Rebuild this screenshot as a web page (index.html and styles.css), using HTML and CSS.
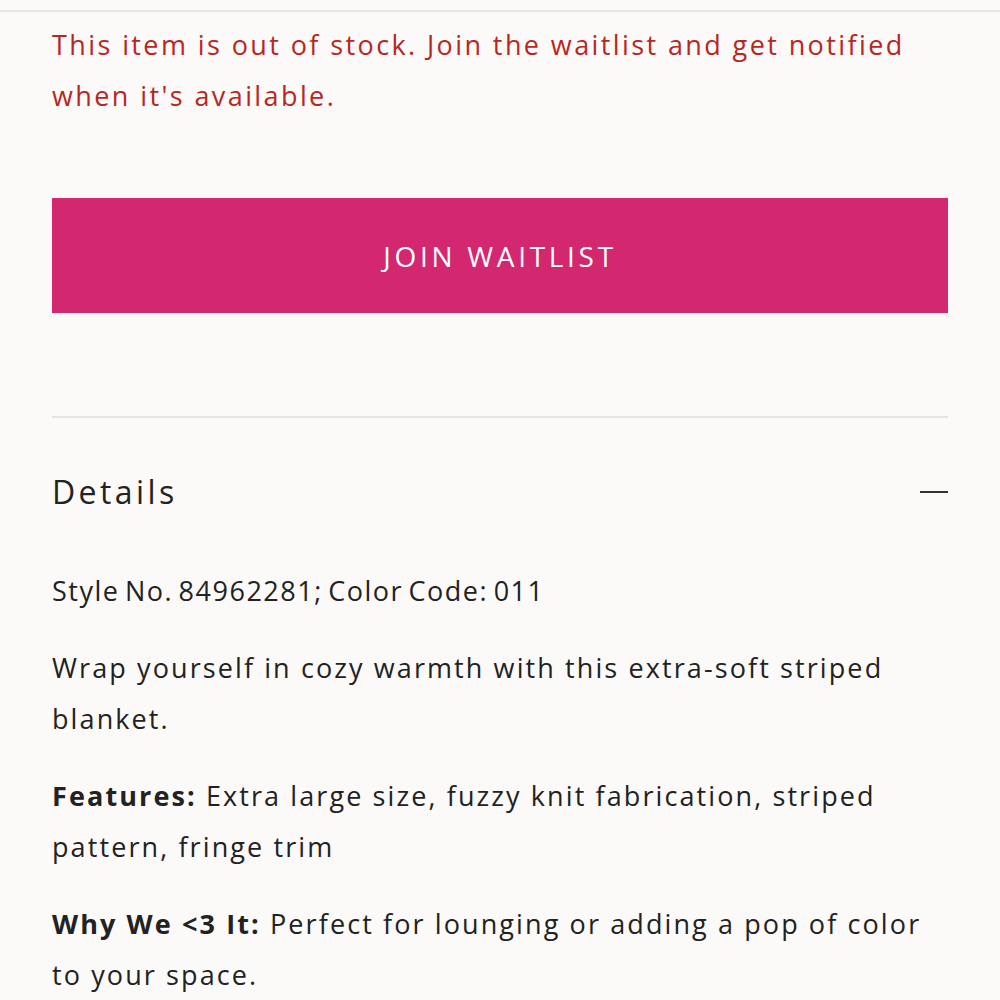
FILE: index.html
```html
<!DOCTYPE html>
<html lang="en">
<head>
    <meta charset="UTF-8">
    <meta name="viewport" content="width=device-width, initial-scale=1.0">
    <title>Striped Blanket</title>
    <link rel="stylesheet" href="styles.css">
</head>
<body>

    <div class="product">
        <p class="stock-note">This item is out of stock. Join the waitlist and get notified when it's available.</p>

        <button class="btn-waitlist">JOIN WAITLIST</button>

        <div class="accordion">
            <div class="accordion-head">
                <h3>Details</h3>
                <span class="minus"></span>
            </div>
            <div class="accordion-body">
                <p class="style-no">Style No. 84962281; Color Code: 011</p>
                <p>Wrap yourself in cozy warmth with this extra-soft striped blanket.</p>
                <p><strong>Features:</strong> Extra large size, fuzzy knit fabrication, striped pattern, fringe trim</p>
                <p><strong>Why We &lt;3 It:</strong> Perfect for lounging or adding a pop of color to your space.</p>
            </div>
        </div>
    </div>

</body>
</html>
```

FILE: styles.css
```css
body {
    margin: 0;
    background-color: #fbfaf8;
    font-family: "Open Sans", Arial, sans-serif;
    color: #222;
}
.product {
    margin-top: 10px;
    border-top: 2px solid #e8e5e2;
    padding: 0 52px;
}
.stock-note {
    margin: 7px 0 0;
    color: #b8271f;
    font-size: 27px;
    line-height: 51px;
    letter-spacing: 2.4px;
}
.btn-waitlist {
    display: block;
    width: 100%;
    height: 115px;
    margin-top: 77px;
    background-color: #d3286f;
    color: #fff;
    border: none;
    font-family: "Open Sans", Arial, sans-serif;
    font-size: 28px;
    letter-spacing: 3.7px;
}
.accordion {
    margin-top: 103px;
    border-top: 2px solid #e6e3e0;
}
.accordion-head {
    display: flex;
    justify-content: space-between;
    align-items: center;
    height: 147px;
}
.accordion-head h3 {
    margin: 0;
    font-size: 32px;
    font-weight: normal;
    letter-spacing: 3.4px;
}
.minus {
    width: 28px;
    height: 2px;
    background-color: #333;
}
.accordion-body p {
    margin: 0 0 26px;
    font-size: 27px;
    line-height: 51px;
    letter-spacing: 2.1px;
}
.accordion-body .style-no {
    letter-spacing: 1.5px;
    word-spacing: -3px;
}
.accordion-body strong {
    font-weight: bold;
}
```
